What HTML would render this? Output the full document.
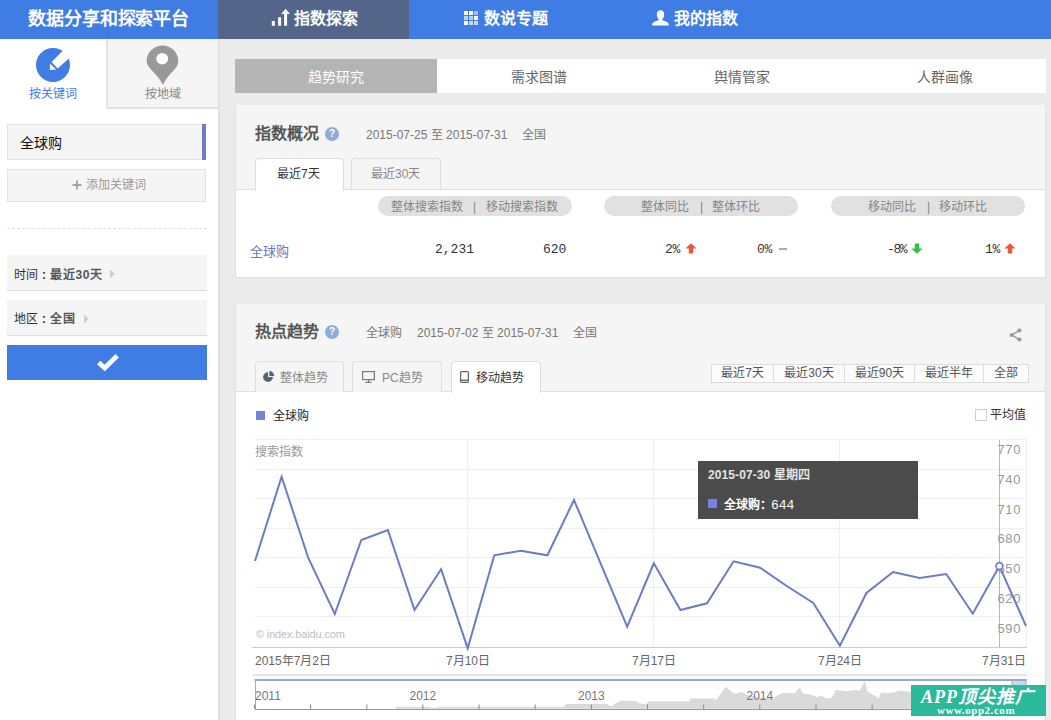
<!DOCTYPE html>
<html lang="zh-CN">
<head>
<meta charset="utf-8">
<title>指数探索</title>
<style>
*{margin:0;padding:0;box-sizing:border-box;}
html,body{width:1051px;height:720px;overflow:hidden;background:#ebebeb;}
body{font-family:"Liberation Sans",sans-serif;font-size:12px;color:#333;position:relative;}
.abs{position:absolute;}
.t{position:absolute;white-space:nowrap;line-height:1;}
/* header */
#hd{left:0;top:0;width:1051px;height:39px;background:#3f7ce3;}
#logo{left:28px;top:10px;font-family:"Liberation Serif",serif;font-weight:bold;font-size:18px;color:#fff;letter-spacing:-0.1px;}
#navact{left:218px;top:0;width:191px;height:39px;background:#54658a;}
.nav{font-size:16px;font-weight:bold;color:#fff;top:11px;}
/* sidebar */
#sb{left:0;top:39px;width:218px;height:682px;background:#fff;}
#sbedge{left:218px;top:39px;width:2px;height:681px;background:#e1e1e1;}
#sbtab2{left:106px;top:39px;width:112px;height:70px;background:#f5f5f5;border-left:2px solid #e4e4e4;border-bottom:2px solid #e4e4e4;}
.box{background:#f5f5f5;border:1px solid #e2e2e2;}
/* panels */
.panel{background:#fff;}
.phead{background:#f5f5f5;}
.ptitle{font-size:16px;font-weight:bold;color:#555;}
.q{width:14px;height:14px;border-radius:50%;background:#8eacdc;color:#fff;font-size:10px;font-weight:bold;text-align:center;line-height:14px;}
.meta{font-size:12px;color:#777;}
.tab{height:32px;border:1px solid #dedede;border-bottom:none;border-radius:4px 4px 0 0;background:#f5f5f5;}
.tab.on{background:#fff;height:33px;}
.pill{height:20px;border-radius:10px;background:#e1e1e1;}
.pl{font-size:12px;color:#858585;top:201px;}
.num{font-family:"Liberation Mono",monospace;font-size:13px;color:#333;}
.rb{top:364px;height:19px;background:#fbfbfb;border:1px solid #dcdcdc;border-left:none;font-size:12px;color:#555;text-align:center;line-height:17px;white-space:nowrap;}
</style>
</head>
<body>

<!-- ================= HEADER ================= -->
<div class="abs" id="hd"></div>
<div class="abs" id="navact"></div>
<div class="t" id="logo">数据分享和探索平台</div>

<!-- nav 1 : 指数探索 -->
<svg class="abs" style="left:271px;top:8px" width="20" height="19" viewBox="0 0 20 19">
  <rect x="0.8" y="13" width="3" height="4.8" fill="#fff"/>
  <rect x="7.1" y="9.2" width="3" height="8.6" fill="#fff"/>
  <rect x="13.1" y="5" width="3" height="12.8" fill="#fff"/>
  <path d="M14.6 0.8 L19 6 L10.2 6 Z" fill="#fff"/>
</svg>
<div class="t nav" style="left:294px">指数探索</div>

<!-- nav 2 : 数说专题 -->
<svg class="abs" style="left:464px;top:11px" width="14" height="14" viewBox="0 0 14 14">
  <g fill="#fff">
    <rect x="0" y="0" width="4" height="4"/><rect x="5" y="0" width="4" height="4"/><rect x="10" y="0" width="4" height="4" opacity=".5"/>
    <rect x="0" y="5" width="4" height="4" opacity=".65"/><rect x="5" y="5" width="4" height="4" opacity=".65"/><rect x="10" y="5" width="4" height="4"/>
    <rect x="0" y="10" width="4" height="4"/><rect x="5" y="10" width="4" height="4" opacity=".7"/><rect x="10" y="10" width="4" height="4" opacity=".7"/>
  </g>
</svg>
<div class="t nav" style="left:484px">数说专题</div>

<!-- nav 3 : 我的指数 -->
<svg class="abs" style="left:652px;top:10px" width="17" height="16" viewBox="0 0 17 16">
  <path fill="#fff" d="M8.5 0.3 C11 0.3 12.2 2.2 12.2 4.6 C12.2 6.6 11.4 8.3 10.3 9.2 L10.3 10.3 C12.5 11 15.6 11.8 16.4 13.2 C16.7 13.9 16.8 14.8 16.8 15.6 L0.2 15.6 C0.2 14.8 0.3 13.9 0.6 13.2 C1.4 11.8 4.5 11 6.7 10.3 L6.7 9.2 C5.6 8.3 4.8 6.6 4.8 4.6 C4.8 2.2 6 0.3 8.5 0.3 Z"/>
</svg>
<div class="t nav" style="left:674px">我的指数</div>

<!-- ================= SIDEBAR ================= -->
<div class="abs" id="sb"></div>
<div class="abs" id="sbedge"></div>
<div class="abs" id="sbtab2"></div>

<!-- keyword icon -->
<svg class="abs" style="left:36px;top:48px" width="34" height="34" viewBox="0 0 34 34">
  <circle cx="17" cy="17" r="17" fill="#3f7ce3"/>
  <path d="M27 2.4 L34 9.6 L21.7 20.6 L15.6 14.1 Z" fill="#fff"/>
  <path d="M13.9 15.6 L20.1 21.6 L13.9 22 Z" fill="#fff"/>
</svg>
<div class="t" style="left:29px;top:88px;font-size:12px;color:#3f7ce3">按关键词</div>

<!-- region pin icon -->
<svg class="abs" style="left:146px;top:45px" width="34" height="41" viewBox="0 0 34 42" preserveAspectRatio="none">
  <path fill="#999999" d="M16.5 0.5 C25.2 0.5 32.3 7.6 32.3 16.3 C32.3 20 30.6 22.6 28.5 25 C25 29 21.5 32 19.2 36.6 C18.2 38.5 17.3 40 16.9 40.9 C16.4 40 15.6 38.5 14.6 36.6 C12 32 8.5 29 5 25 C2.5 22.3 0.7 20 0.7 16.3 C0.7 7.6 7.8 0.5 16.5 0.5 Z"/>
  <circle cx="16.2" cy="14" r="5.9" fill="#fff"/>
</svg>
<div class="t" style="left:145px;top:88px;font-size:12px;color:#888">按地域</div>

<!-- keyword box -->
<div class="abs box" style="left:7px;top:124px;width:199px;height:36px"></div>
<div class="abs" style="left:202px;top:124px;width:4px;height:36px;background:#6e7cca"></div>
<div class="t" style="left:20px;top:136px;font-size:14px;color:#111">全球购</div>

<!-- add keyword box -->
<div class="abs box" style="left:7px;top:169px;width:199px;height:33px"></div>
<svg class="abs" style="left:72px;top:180px" width="10" height="10" viewBox="0 0 10 10"><path d="M5 0.5V9.5M0.5 5H9.5" stroke="#a6a6a6" stroke-width="2" fill="none"/></svg>
<div class="t" style="left:86px;top:179px;font-size:12px;color:#999">添加关键词</div>

<!-- dashed separator -->
<div class="abs" style="left:7px;top:228px;width:200px;height:0;border-top:1px dashed #e2e2e2"></div>

<!-- time box -->
<div class="abs" style="left:7px;top:255px;width:200px;height:36px;background:#f5f5f5;border-bottom:1px solid #dddddd"></div>
<div class="t" style="left:14px;top:269px;font-size:12px;color:#333">时间</div><div class="t" style="left:42px;top:269px;font-size:12px;color:#333;font-weight:bold">:</div><div class="t" style="left:50px;top:269px;font-size:12px;color:#555;font-weight:bold;letter-spacing:0.7px">最近30天</div>
<svg class="abs" style="left:110px;top:269px" width="5" height="10" viewBox="0 0 5 10"><path d="M0 0.5L4.5 5L0 9.5Z" fill="#ccc"/></svg>

<!-- region box -->
<div class="abs" style="left:7px;top:300px;width:200px;height:36px;background:#f5f5f5;border-bottom:1px solid #dddddd"></div>
<div class="t" style="left:14px;top:313px;font-size:12px;color:#333">地区</div><div class="t" style="left:42px;top:313px;font-size:12px;color:#333;font-weight:bold">:</div><div class="t" style="left:50px;top:313px;font-size:12px;color:#555;font-weight:bold;letter-spacing:0.7px">全国</div>
<svg class="abs" style="left:84px;top:314px" width="5" height="10" viewBox="0 0 5 10"><path d="M0 0.5L4.5 5L0 9.5Z" fill="#ccc"/></svg>

<!-- confirm button -->
<div class="abs" style="left:7px;top:345px;width:200px;height:35px;background:#3f7ce3"></div>
<svg class="abs" style="left:96px;top:353px" width="24" height="18" viewBox="0 0 24 18">
  <path d="M2.6 9.4 L8.7 15 L21.2 2.8" stroke="#fff" stroke-width="4.8" fill="none" stroke-linecap="butt" stroke-linejoin="miter"/>
</svg>

<!-- ================= SUB TABS ================= -->
<div class="abs" style="left:235px;top:59px;width:811px;height:34px;background:#fff"></div>
<div class="abs" style="left:235px;top:59px;width:202px;height:34px;background:#b4b4b4"></div>
<div class="t" style="left:308px;top:70px;font-size:14px;color:#fff">趋势研究</div>
<div class="t" style="left:511px;top:70px;font-size:14px;color:#666">需求图谱</div>
<div class="t" style="left:714px;top:70px;font-size:14px;color:#666">舆情管家</div>
<div class="t" style="left:917px;top:70px;font-size:14px;color:#666">人群画像</div>

<!-- ================= PANEL 1 : 指数概况 ================= -->
<div class="abs phead" style="left:235px;top:105px;width:811px;height:85px;border-left:1px solid #e4e4e4;border-right:1px solid #e4e4e4"></div>
<div class="abs panel" style="left:235px;top:189px;width:811px;height:89px;border:1px solid #e0e0e0;border-top:1px solid #dedede"></div>
<div class="t ptitle" style="left:255px;top:126px">指数概况</div>
<div class="abs q" style="left:325px;top:127px">?</div>
<div class="t meta" style="left:366px;top:129px">2015-07-25 至 2015-07-31</div>
<div class="t meta" style="left:522px;top:129px">全国</div>

<div class="abs tab on" style="left:255px;top:158px;width:89px"></div>
<div class="abs tab" style="left:351px;top:158px;width:90px;height:31px"></div>
<div class="t" style="left:277px;top:168px;font-size:12px;color:#333">最近7天</div>
<div class="t" style="left:371px;top:168px;font-size:12px;color:#888">最近30天</div>

<div class="abs pill" style="left:378px;top:196px;width:194px"></div>
<div class="abs pill" style="left:604px;top:196px;width:194px"></div>
<div class="abs pill" style="left:831px;top:196px;width:194px"></div>
<div class="t pl" style="left:391px">整体搜索指数</div><div class="t pl" style="left:473px">|</div><div class="t pl" style="left:486px">移动搜索指数</div>
<div class="t pl" style="left:641px">整体同比</div><div class="t pl" style="left:700px">|</div><div class="t pl" style="left:712px">整体环比</div>
<div class="t pl" style="left:868px">移动同比</div><div class="t pl" style="left:927px">|</div><div class="t pl" style="left:939px">移动环比</div>

<div class="t" style="left:250px;top:245px;font-size:13px;color:#6a78c6">全球购</div>
<div class="t num" style="left:435px;top:243px">2,231</div>
<div class="t num" style="left:543px;top:243px">620</div>
<div class="t num" style="left:665px;top:243px;letter-spacing:-0.4px">2%</div>
<div class="t num" style="left:757px;top:243px;letter-spacing:-0.4px">0%</div>
<div class="t num" style="left:887px;top:243px;letter-spacing:-1.4px">-8%</div>
<div class="t num" style="left:985px;top:243px;letter-spacing:-0.4px">1%</div>
<!-- arrows -->
<svg class="abs" style="left:685px;top:243px" width="12" height="11" viewBox="0 0 12 11"><path d="M6 0.3 L11.6 5.6 L8.2 5.6 L8.2 10.4 L3.8 10.4 L3.8 5.6 L0.4 5.6 Z" fill="#e9573f"/></svg>
<div class="abs" style="left:779px;top:248px;width:8px;height:2px;background:#aaa"></div>
<svg class="abs" style="left:911px;top:243px" width="12" height="11" viewBox="0 0 12 11"><path d="M6 10.7 L11.6 5.4 L8.2 5.4 L8.2 0.6 L3.8 0.6 L3.8 5.4 L0.4 5.4 Z" fill="#2fc43c"/></svg>
<svg class="abs" style="left:1004px;top:243px" width="12" height="11" viewBox="0 0 12 11"><path d="M6 0.3 L11.6 5.6 L8.2 5.6 L8.2 10.4 L3.8 10.4 L3.8 5.6 L0.4 5.6 Z" fill="#e9573f"/></svg>

<!-- ================= PANEL 2 : 热点趋势 ================= -->
<div class="abs phead" style="left:235px;top:304px;width:811px;height:88px;border-left:1px solid #e4e4e4;border-right:1px solid #e4e4e4"></div>
<div class="abs panel" style="left:235px;top:391px;width:811px;height:340px;border:1px solid #e0e0e0;border-top:1px solid #dedede"></div>
<div class="t ptitle" style="left:255px;top:324px">热点趋势</div>
<div class="abs q" style="left:325px;top:325px">?</div>
<div class="t meta" style="left:366px;top:327px">全球购</div>
<div class="t meta" style="left:417px;top:327px">2015-07-02 至 2015-07-31</div>
<div class="t meta" style="left:573px;top:327px">全国</div>

<!-- share icon -->
<svg class="abs" style="left:1009px;top:328px" width="13" height="14" viewBox="0 0 13 14">
  <path d="M10.3 2.6 L2.9 7 L10.3 11.4" stroke="#999" stroke-width="1.3" fill="none"/>
  <circle cx="10.4" cy="2.5" r="2.1" fill="#999"/><circle cx="2.6" cy="7" r="2.1" fill="#999"/><circle cx="10.4" cy="11.5" r="2.1" fill="#999"/>
</svg>

<!-- trend tabs -->
<div class="abs tab" style="left:255px;top:361px;width:89px;height:31px"></div>
<div class="abs tab" style="left:352px;top:361px;width:90px;height:31px"></div>
<div class="abs tab on" style="left:451px;top:361px;width:90px;height:32px"></div>
<svg class="abs" style="left:263px;top:371px" width="12" height="11" viewBox="0 0 12 11">
  <path d="M5 1.2 A4.9 4.9 0 1 0 9.9 6.1 L5 6.1 Z" fill="#56627a"/>
  <path d="M6.3 0 A4.9 4.9 0 0 1 11.2 4.9 L6.3 4.9 Z" fill="#56627a"/>
</svg>
<div class="t" style="left:280px;top:372px;font-size:12px;color:#888">整体趋势</div>
<svg class="abs" style="left:362px;top:371px" width="13" height="12" viewBox="0 0 13 12">
  <rect x="0.6" y="0.6" width="11.8" height="8" fill="none" stroke="#777" stroke-width="1.2"/>
  <path d="M6.5 8.6V11M3.5 11.3H9.5" stroke="#777" stroke-width="1.2" fill="none"/>
</svg>
<div class="t" style="left:382px;top:372px;font-size:12px;color:#888">PC趋势</div>
<svg class="abs" style="left:460px;top:371px" width="9" height="12" viewBox="0 0 9 12">
  <rect x="0.6" y="0.6" width="7.8" height="10.8" rx="1" fill="none" stroke="#666" stroke-width="1.2"/>
  <path d="M0.6 9.2H8.4" stroke="#666" stroke-width="1.4"/>
</svg>
<div class="t" style="left:476px;top:372px;font-size:12px;color:#333">移动趋势</div>

<!-- range buttons -->
<div class="abs rb" style="left:711px;width:63px;border-left:1px solid #dcdcdc">最近7天</div>
<div class="abs rb" style="left:774px;width:71px">最近30天</div>
<div class="abs rb" style="left:845px;width:70px">最近90天</div>
<div class="abs rb" style="left:915px;width:69px">最近半年</div>
<div class="abs rb" style="left:984px;width:45px">全部</div>

<!-- legend -->
<div class="abs" style="left:256px;top:411px;width:9px;height:9px;background:#7682d6"></div>
<div class="t" style="left:273px;top:410px;font-size:12px;color:#222">全球购</div>
<div class="abs" style="left:975px;top:409px;width:12px;height:12px;background:#fff;border:1px solid #cfcfcf"></div>
<div class="t" style="left:990px;top:409px;font-size:12px;color:#333">平均值</div>

<!-- chart -->
<svg class="abs" style="left:0;top:0" width="1051" height="720" viewBox="0 0 1051 720">
  <g stroke="#f0f0f0" stroke-width="1" fill="none" shape-rendering="crispEdges"><path d="M255 439.5H1026.5"/><path d="M255 469.0H1026.5"/><path d="M255 498.5H1026.5"/><path d="M255 528.0H1026.5"/><path d="M255 557.5H1026.5"/><path d="M255 587.0H1026.5"/><path d="M255 616.5H1026.5"/> <path d="M467.7 439.5V647"/><path d="M653.8 439.5V647"/><path d="M839.9 439.5V647"/><path d="M1026.5 439.5V647"/></g>
  <path d="M251.5 647.5H1026.5" stroke="#cccccc" stroke-width="1" fill="none" shape-rendering="crispEdges"/>
  <path d="M999.5 440V647" stroke="#b8b8b8" stroke-width="1" fill="none" shape-rendering="crispEdges"/>
  <g font-family="'Liberation Sans',sans-serif" font-size="13" fill="#999" letter-spacing="0.6"><text x="1021" y="454.0" text-anchor="end">770</text><text x="1021" y="484.0" text-anchor="end">740</text><text x="1021" y="513.5" text-anchor="end">710</text><text x="1021" y="543.0" text-anchor="end">680</text><text x="1021" y="572.5" text-anchor="end">650</text><text x="1021" y="602.5" text-anchor="end">620</text><text x="1021" y="632.5" text-anchor="end">590</text></g>
  <polyline points="255.0,561.0 281.6,476.7 308.2,557.7 334.8,614.0 361.3,540.0 387.9,530.0 414.5,610.0 441.1,569.3 467.7,648.3 494.3,555.3 520.9,550.7 547.4,555.3 574.0,500.0 600.6,563.3 627.2,626.7 653.8,563.3 680.4,610.0 707.0,603.3 733.6,561.3 760.1,567.7 786.7,586.0 813.3,603.0 839.9,645.7 866.5,593.0 893.1,572.0 919.7,578.0 946.2,574.0 972.8,613.7 999.4,566.0 1026.0,626.0" fill="none" stroke="#6c7cc4" stroke-width="2" stroke-linejoin="miter"/>
  <circle cx="999.4" cy="566" r="3.4" fill="#fff" stroke="#6c7cc4" stroke-width="1.6"/>
  <!-- range selector -->
  <path d="M253 675H1027" stroke="#dedede" stroke-width="1.6" fill="none"/>
  <path d="M396.0 708.8 L396.0 706.7 L430.5 706.7 L431.0 707.8 L437.0 707.8 L437.0 706.8 L563.8 706.8 L566.5 704.0 L573.0 704.0 L606.4 704.0 L610.0 706.0 L612.0 706.0 L614.4 704.0 L621.0 700.8 L635.7 701.0 L640.0 703.4 L646.7 704.0 L648.0 701.3 L689.3 701.3 L690.0 698.6 L713.3 698.6 L716.0 700.0 L725.8 686.7 L730.6 691.2 L735.9 693.8 L741.2 692.0 L746.6 694.6 L760.0 697.5 L773.2 698.6 L778.5 694.6 L783.8 692.8 L794.5 693.3 L799.8 687.5 L803.0 693.8 L810.5 694.6 L817.0 697.3 L821.0 695.4 L826.5 698.6 L831.8 698.0 L835.8 690.0 L847.8 691.2 L853.0 690.0 L859.8 690.6 L864.6 681.3 L867.8 692.0 L874.4 695.4 L878.4 698.6 L881.0 692.8 L893.0 692.8 L899.7 690.6 L910.4 692.0 L925.0 690.0 L940.0 693.0 L960.0 688.0 L980.0 692.0 L1000.0 686.0 L1026.0 690.0 L1026.0 708.8 Z" fill="#dadada"/>
  <rect x="1012" y="680" width="14" height="29" fill="#c3dcf3" stroke="#8db0dd" stroke-width="1"/>
  <path d="M254.5 680H1026.5" stroke="#93a8cf" stroke-width="2" fill="none"/>
  <path d="M255 680V709" stroke="#aaaaaa" stroke-width="1" fill="none" shape-rendering="crispEdges"/>
  <path d="M254.5 709H1026.5" stroke="#999999" stroke-width="1" fill="none" shape-rendering="crispEdges"/>
  <g stroke="#888" stroke-width="1" fill="none"><path d="M254.5 704.5V709"/><path d="M310.6 704.5V709"/><path d="M366.8 704.5V709"/><path d="M422.9 704.5V709"/><path d="M479.1 704.5V709"/><path d="M535.2 704.5V709"/><path d="M591.4 704.5V709"/><path d="M647.5 704.5V709"/><path d="M703.7 704.5V709"/><path d="M759.8 704.5V709"/><path d="M816.0 704.5V709"/><path d="M872.1 704.5V709"/><path d="M928.3 704.5V709"/><path d="M984.4 704.5V709"/></g>
  <g font-family="'Liberation Sans',sans-serif" font-size="12" fill="#777">
    <text x="255" y="700">2011</text><text x="409.5" y="700">2012</text><text x="578" y="700">2013</text><text x="746.5" y="700">2014</text>
  </g>
</svg>
<div class="t" style="left:255px;top:446px;font-size:12px;color:#999">搜索指数</div>
<div class="t" style="left:256px;top:629px;font-size:11px;color:#bebebe;letter-spacing:-0.15px">© index.baidu.com</div>
<div class="t" style="left:255px;top:655px;font-size:12px;color:#666">2015年7月2日</div>
<div class="t" style="left:446px;top:655px;font-size:12px;color:#666">7月10日</div>
<div class="t" style="left:632px;top:655px;font-size:12px;color:#666">7月17日</div>
<div class="t" style="left:818px;top:655px;font-size:12px;color:#666">7月24日</div>
<div class="t" style="left:982px;top:655px;font-size:12px;color:#666">7月31日</div>

<!-- tooltip -->
<div class="abs" style="left:698px;top:461px;width:220px;height:58px;background:#4b4b4b"></div>
<div class="t" style="left:708px;top:469px;font-size:12px;color:#e4e4e4;font-weight:bold;letter-spacing:0.1px">2015-07-30 星期四</div>
<div class="abs" style="left:708px;top:499px;width:9px;height:9px;background:#7382e4"></div>
<div class="t" style="left:724px;top:499px;font-size:12px;color:#fff;font-weight:bold">全球购：</div>
<div class="t num" style="left:771px;top:499px;color:#fff">644</div>

<!-- watermark -->
<div class="abs" style="left:911px;top:685px;width:135px;height:31px;background:#2bb99b"></div>
<div class="t" style="left:921px;top:688px;font-family:'Liberation Serif',serif;font-style:italic;font-weight:bold;font-size:18px;color:#fff;letter-spacing:1px">APP顶尖推广</div>
<div class="t" style="left:937px;top:705px;font-family:'Liberation Serif',serif;font-weight:bold;font-size:11px;color:#fff;letter-spacing:0.55px">www.opp2.com</div>


</body>
</html>
